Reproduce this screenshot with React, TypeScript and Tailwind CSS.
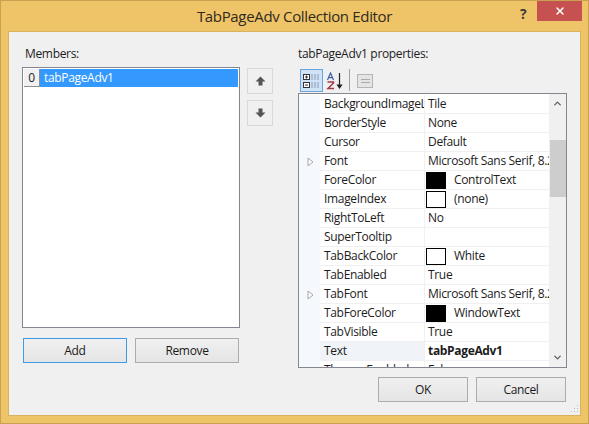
import { ChevronDown, ChevronUp, X } from 'lucide-react';

type Prop = {
    name: string;
    value: string;
    swatch?: string;
    expand?: boolean;
    bold?: boolean;
};

const props: Prop[] = [
    { name: 'BackgroundImageL', value: 'Tile' },
    { name: 'BorderStyle', value: 'None' },
    { name: 'Cursor', value: 'Default' },
    { name: 'Font', value: 'Microsoft Sans Serif, 8.25pt', expand: true },
    { name: 'ForeColor', value: 'ControlText', swatch: 'bg-black' },
    { name: 'ImageIndex', value: '(none)', swatch: 'bg-white' },
    { name: 'RightToLeft', value: 'No' },
    { name: 'SuperTooltip', value: '' },
    { name: 'TabBackColor', value: 'White', swatch: 'bg-white' },
    { name: 'TabEnabled', value: 'True' },
    { name: 'TabFont', value: 'Microsoft Sans Serif, 8.25pt', expand: true },
    { name: 'TabForeColor', value: 'WindowText', swatch: 'bg-black' },
    { name: 'TabVisible', value: 'True' },
    { name: 'Text', value: 'tabPageAdv1', bold: true },
    { name: 'ThemesEnabled', value: 'False' },
];

function PushButton({ label, width, focused }: { label: string; width: string; focused?: boolean }) {
    return (
        <button
            className={`${width} h-[25px] border bg-gradient-to-b from-[#f0f0f0] to-[#e5e5e5] pt-[1px] text-[12px] text-[#1a1a1a] ${focused ? 'border-[#3f9ae8]' : 'border-[#acacac]'}`}
        >
            {label}
        </button>
    );
}

function PropRow({ prop }: { prop: Prop }) {
    const selected = prop.name === 'Text';
    return (
        <div className="flex h-[19px] shrink-0 items-center">
            <div className="flex h-full w-[21px] shrink-0 items-center justify-center bg-[#f5f9fe]">
                {prop.expand && (
                    <svg width="7" height="10" viewBox="0 0 7 10" className="ml-[1px]">
                        <path d="M1 1 L6 5 L1 9 Z" fill="white" stroke="#a6a6a6" />
                    </svg>
                )}
            </div>
            <div
                className={`flex h-full w-[105px] shrink-0 items-center overflow-hidden border-b border-r border-[#f0f0f0] pl-[4px] ${selected ? 'bg-[#f0f3f7]' : ''}`}
            >
                <span className="whitespace-nowrap">{prop.name}</span>
            </div>
            <div
                className={`flex h-full min-w-0 flex-1 items-center overflow-hidden border-b border-[#f0f0f0] ${prop.swatch ? 'pl-[1px]' : 'pl-[3px]'}`}
            >
                {prop.swatch && (
                    <span className={`mr-[8px] h-[17px] w-[20px] shrink-0 border border-black ${prop.swatch}`} />
                )}
                <span className={`whitespace-nowrap ${prop.bold ? 'font-bold' : ''}`}>{prop.value}</span>
            </div>
        </div>
    );
}

export default function App() {
    return (
        <div className="flex h-[424px] w-[589px] flex-col overflow-hidden border border-[#c9a24f] bg-[#efc468] font-['Open_Sans','Liberation_Sans',sans-serif] text-[12px] leading-none tracking-[-0.33px] text-[#1c1c1c]">
            {/* title bar */}
            <div className="relative flex h-[30px] shrink-0 items-center justify-center pt-[1px] text-[15px] text-[#2f2a1e]">
                TabPageAdv Collection Editor
                <span className="absolute left-[519px] top-[6px] text-[14px] font-bold text-[#3a3a3a]">?</span>
                <div className="absolute left-[536px] top-0 flex h-[20px] w-[45px] items-center justify-center bg-[#c75050]">
                    <X size={12} strokeWidth={3} className="text-white" />
                </div>
            </div>

            {/* client area */}
            <div className="relative mx-[7px] mb-[7px] flex min-h-0 flex-1 border border-[#d8b25c] bg-[#f0f0f0] pl-[13px] pt-[15px]">
                {/* members side */}
                <div className="flex w-[218px] shrink-0 flex-col">
                    <div className="ml-[3px] h-[20px] pt-[1px]">Members:</div>
                    <div className="h-[261px] border border-[#828790] bg-white p-[1px]">
                        <div className="flex h-[18px]">
                            <div className="flex w-[16px] items-center justify-center border-r border-b border-[#8f8f8f] bg-[#f0f0f0]">0</div>
                            <div className="flex flex-1 items-center bg-[#3399ff] pl-[4px] text-white">tabPageAdv1</div>
                        </div>
                    </div>
                    <div className="ml-[1px] mt-[10px] flex gap-[8px]">
                        <PushButton label="Add" width="w-[104px]" focused />
                        <PushButton label="Remove" width="w-[104px]" />
                    </div>
                </div>

                {/* move buttons */}
                <div className="ml-[7px] mt-[21px] flex w-[26px] shrink-0 flex-col gap-[6px]">
                    <div className="flex h-[26px] items-center justify-center border border-[#d9d9d9] bg-[#f0f0f0]">
                        <svg width="11" height="10" viewBox="0 0 11 10">
                            <path d="M5.5 0.5 L10.5 5.5 H7.5 V9.5 H3.5 V5.5 H0.5 Z" fill="#555" />
                        </svg>
                    </div>
                    <div className="flex h-[26px] items-center justify-center border border-[#d9d9d9] bg-[#f0f0f0]">
                        <svg width="11" height="10" viewBox="0 0 11 10">
                            <path d="M5.5 9.5 L10.5 4.5 H7.5 V0.5 H3.5 V4.5 H0.5 Z" fill="#555" />
                        </svg>
                    </div>
                </div>

                {/* properties side */}
                <div className="ml-[25px] flex w-[269px] shrink-0 flex-col">
                    <div className="h-[22px] pt-[1px]">tabPageAdv1 properties:</div>
                    <div className="flex h-[24px] items-start pl-[2px]">
                        <div className="flex h-[23px] w-[23px] items-center justify-center border border-[#6aa5dc] bg-[#cfe3f7]">
                            <svg width="17" height="16" viewBox="0 0 17 16">
                                <rect x="0.5" y="1.5" width="6" height="5" fill="white" stroke="#333" />
                                <rect x="0.5" y="9.5" width="6" height="5" fill="white" stroke="#333" />
                                <path d="M2 4h3M3.5 2.5v3M2 12h3" stroke="#333" />
                                <path d="M8 2h8M8 4h8M8 6h8M8 10h8M8 12h8M8 14h8" stroke="#8a9ab0" strokeDasharray="2 1" />
                            </svg>
                        </div>
                        <div className="flex h-[23px] w-[24px] items-center justify-center">
                            <svg width="18" height="18" viewBox="0 0 18 18">
                                <path d="M1.5 8 L4.5 1 L7.5 8 M2.6 5.7h3.8" fill="none" stroke="#3d5fa8" strokeWidth="1.2" />
                                <path d="M1.5 10h6v1L2 16.5h6" fill="none" stroke="#a33a4a" strokeWidth="1.5" />
                                <path d="M13.5 1v14M11.5 13l2 3 2-3z" stroke="#222" strokeWidth="1.2" fill="#222" />
                            </svg>
                        </div>
                        <div className="mx-[2px] h-[22px] w-px bg-[#a0a0a0]" />
                        <div className="ml-[4px] flex h-[23px] w-[18px] items-center justify-center">
                            <div className="flex h-[14px] w-[16px] flex-col justify-center gap-[2px] border border-[#b5b5b5] bg-[#e4e4e4] pl-[3px]">
                                <span className="h-px w-[9px] bg-[#aaaaaa]" />
                                <span className="h-px w-[9px] bg-[#aaaaaa]" />
                            </div>
                        </div>
                    </div>
                    <div className="flex h-[275px] border border-[#828790] bg-white">
                        <div className="flex min-w-0 flex-1 flex-col overflow-hidden pt-[1px]">
                            {props.map(p => (
                                <PropRow key={p.name} prop={p} />
                            ))}
                        </div>
                        <div className="flex w-[17px] shrink-0 flex-col items-center justify-between bg-[#f0f0f0] py-[4px]">
                            <ChevronUp size={11} strokeWidth={3} className="text-[#606060]" />
                            <ChevronDown size={11} strokeWidth={3} className="text-[#606060]" />
                        </div>
                    </div>
                    <div className="mt-[9px] flex justify-end gap-[8px] pr-[1px]">
                        <PushButton label="OK" width="w-[90px]" />
                        <PushButton label="Cancel" width="w-[90px]" />
                    </div>
                </div>

                {/* scrollbar thumb */}
                <div className="absolute left-[541px] top-[108px] h-[57px] w-[16px] bg-[#cdcdcd]" />

                {/* size grip */}
                <svg width="10" height="10" viewBox="0 0 10 10" className="absolute bottom-[1px] right-[1px]">
                    <path d="M8 1h1v1H8zM5 4h1v1H5zM8 4h1v1H8zM2 7h1v1H2zM5 7h1v1H5zM8 7h1v1H8z" fill="#b8b8b8" />
                </svg>
            </div>
        </div>
    );
}
